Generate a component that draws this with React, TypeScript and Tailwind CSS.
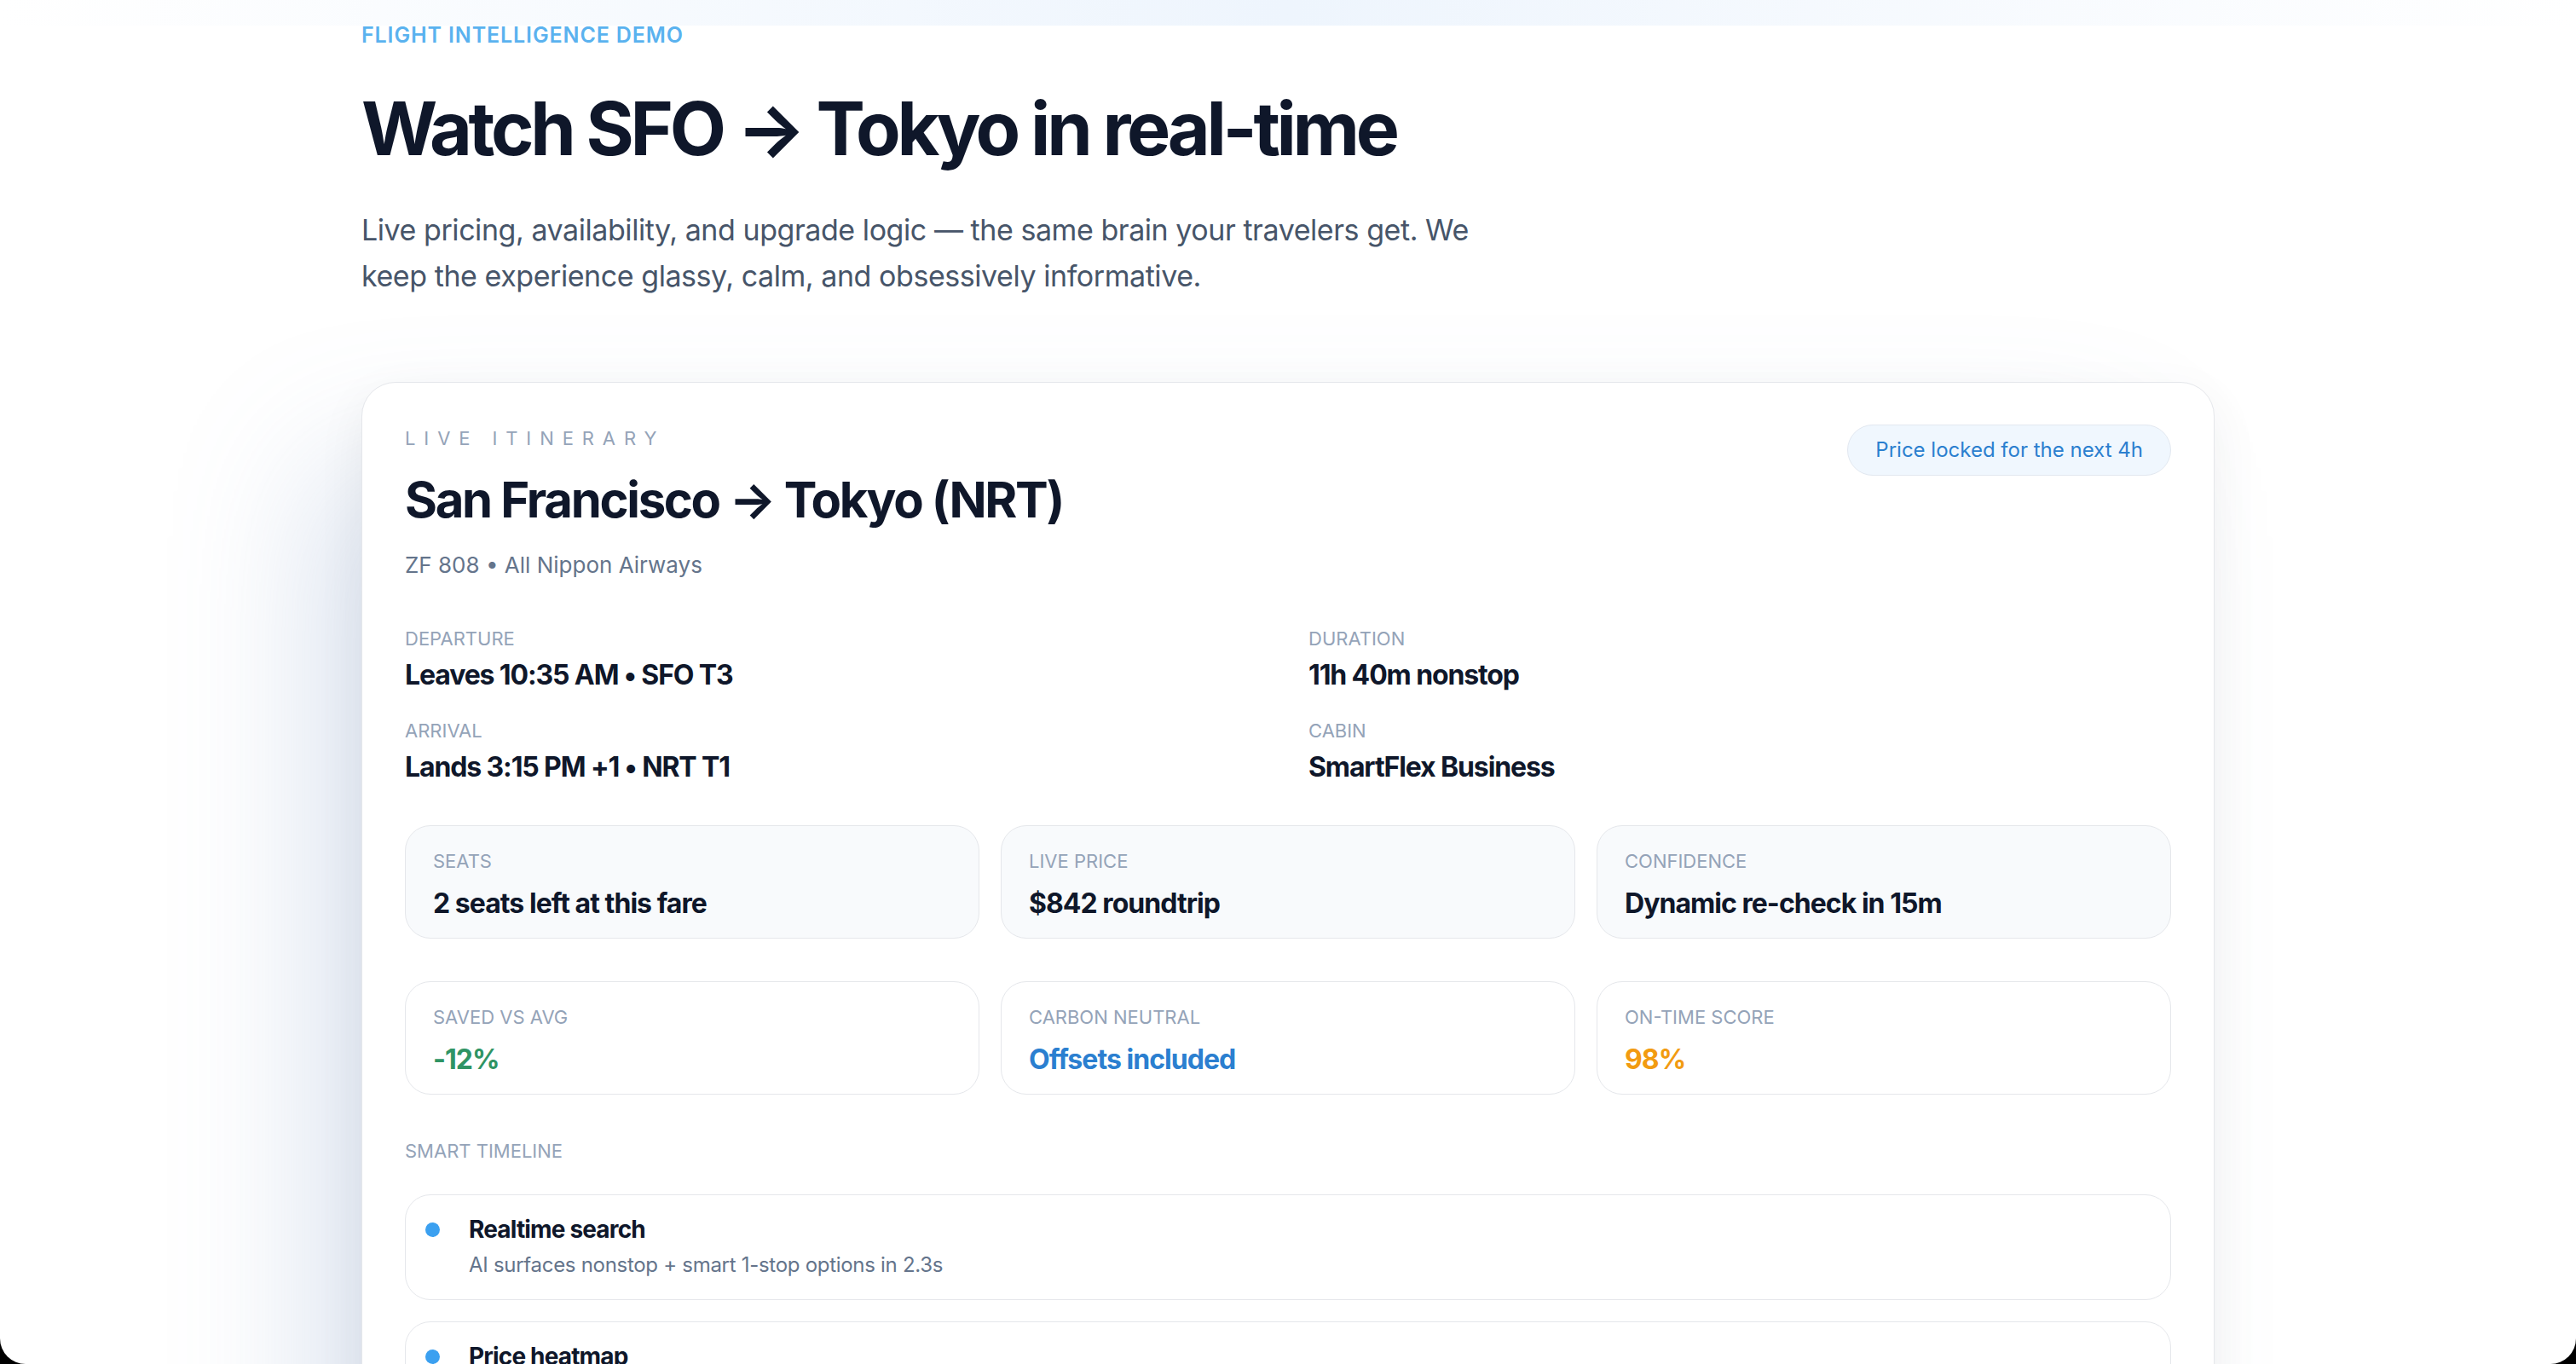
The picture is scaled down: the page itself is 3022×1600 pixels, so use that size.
import React from "react";

const font = { fontFamily: "Inter, 'Noto Sans', sans-serif" };

function Detail({ label, value }: { label: string; value: string }) {
  return (
    <div className="flex flex-col gap-[5px]">
      <div className="text-[22px] leading-[33px] uppercase text-[#94a3b8]">{label}</div>
      <div className="text-[32px] leading-[41px] font-bold tracking-[-0.035em] text-[#0f172a]">{value}</div>
    </div>
  );
}

function Stat({
  label,
  value,
  tint,
  valueClass,
}: {
  label: string;
  value: string;
  tint?: boolean;
  valueClass: string;
}) {
  return (
    <div
      className={
        "flex h-[133px] flex-col rounded-[30px] border border-[#e5e7eb] px-[32px] pt-[25px] " +
        (tint ? "bg-[#f8fafc]" : "bg-white")
      }
    >
      <div className="text-[22px] leading-[33px] uppercase text-[#94a3b8]">{label}</div>
      <div className={"mt-[12px] text-[32px] leading-[41px] font-bold tracking-[-0.03em] " + valueClass}>{value}</div>
    </div>
  );
}

function TimelineItem({ title, desc }: { title: string; desc: string }) {
  return (
    <div className="flex gap-[34px] rounded-[30px] border border-[#e5e7eb] bg-white px-[23px] pt-[21px] pb-[22px]">
      <div className="mt-[11px] h-[17px] w-[17px] shrink-0 rounded-full bg-[#3ba0f0]" />
      <div className="flex flex-col gap-[4px]">
        <div className="text-[28px] leading-[39px] font-bold tracking-[-0.03em] text-[#0f172a]">{title}</div>
        <div className="text-[24px] leading-[36px] tracking-[-0.012em] text-[#64748b]">{desc}</div>
      </div>
    </div>
  );
}

export default function App() {
  return (
    <div className="h-[1600px] w-full bg-black" style={font}>
      <div className="relative h-[1600px] w-full overflow-hidden rounded-b-[30px] bg-white">
        <div className="absolute left-0 right-0 top-0 h-[30px] bg-linear-to-r from-white via-[#eef5fd] to-white" />
        <div className="relative mx-auto w-[2174px] pt-[23px]">
          <div className="text-[25px] leading-[37px] font-semibold uppercase tracking-[0.035em] text-[#5ab2ef]">
            Flight intelligence demo
          </div>
          <h1 className="mt-[44px] text-[86px] leading-[95px] font-bold tracking-[-0.05em] text-[#0f172a]">
            Watch SFO → Tokyo in real-time
          </h1>
          <p className="mt-[44px] max-w-[1340px] text-[34px] leading-[54px] tracking-[-0.013em] text-[#475569]">
            Live pricing, availability, and upgrade logic — the same brain your travelers get. We keep the experience
            glassy, calm, and obsessively informative.
          </p>

          <div className="mt-[97px] rounded-[40px] border border-[#e5e7eb] bg-white px-[50px] pt-[49px] pb-[60px] shadow-[-80px_70px_170px_-30px_rgba(110,140,190,0.26),0_20px_60px_rgba(15,23,42,0.06)]">
            <div className="flex items-start justify-between">
              <div className="flex flex-col">
                <div className="text-[22px] leading-[33px] uppercase tracking-[0.45em] text-[#94a3b8]">
                  Live itinerary
                </div>
                <div className="mt-[20px] text-[58px] leading-[70px] font-bold tracking-[-0.04em] text-[#0f172a]">
                  San Francisco → Tokyo (NRT)
                </div>
                <div className="mt-[22px] text-[26px] leading-[39px] text-[#64748b]">ZF 808 • All Nippon Airways</div>
              </div>
              <div className="rounded-full border border-[#e2e8f0] bg-[#f0f7fe] px-[32px] py-[11px] text-[24px] leading-[36px] text-[#2b7fcf]">
                Price locked for the next 4h
              </div>
            </div>

            <div className="mt-[51px] grid grid-cols-2 gap-x-[48px] gap-y-[29px]">
              <Detail label="Departure" value="Leaves 10:35 AM • SFO T3" />
              <Detail label="Duration" value="11h 40m nonstop" />
              <Detail label="Arrival" value="Lands 3:15 PM +1 • NRT T1" />
              <Detail label="Cabin" value="SmartFlex Business" />
            </div>

            <div className="mt-[48px] grid grid-cols-3 gap-[25px]">
              <Stat tint label="Seats" value="2 seats left at this fare" valueClass="text-[#0f172a]" />
              <Stat tint label="Live price" value="$842 roundtrip" valueClass="text-[#0f172a]" />
              <Stat tint label="Confidence" value="Dynamic re-check in 15m" valueClass="text-[#0f172a]" />
            </div>
            <div className="mt-[50px] grid grid-cols-3 gap-[25px]">
              <Stat label="Saved vs avg" value="-12%" valueClass="text-[#2f9464]" />
              <Stat label="Carbon neutral" value="Offsets included" valueClass="text-[#2b7fd0]" />
              <Stat label="On-time score" value="98%" valueClass="text-[#f29b11]" />
            </div>

            <div className="mt-[50px] text-[22px] leading-[33px] uppercase text-[#94a3b8]">Smart timeline</div>
            <div className="mt-[34px] flex flex-col gap-[25px]">
              <TimelineItem title="Realtime search" desc="AI surfaces nonstop + smart 1-stop options in 2.3s" />
              <TimelineItem title="Price heatmap" desc="Fares visualized across the week so you can flex with confidence" />
              <TimelineItem title="Upgrade logic" desc="Auto-detects when points beat cash for business class" />
            </div>
          </div>
        </div>
      </div>
    </div>
  );
}
